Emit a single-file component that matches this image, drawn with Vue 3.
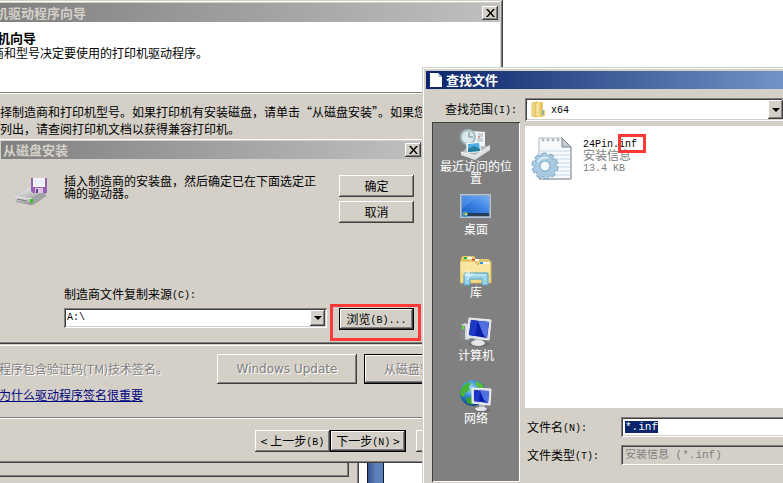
<template>
  <main class="desktop">
    <!-- 后面的窗口 -->
    <div class="back-window"><div class="back-panel"></div></div>
    <div class="blue-strip"></div>

    <!-- 添加打印机驱动程序向导 -->
    <section class="window wizard">
      <header class="title-bar inactive">
        <span class="title">机驱动程序向导</span>
        <button class="close" type="button" aria-label="关闭">
          <svg width="9" height="8" viewBox="0 0 9 8"><path d="M0 0h2l2.5 3L7 0h2L5.5 4 9 8H7L4.5 5 2 8H0l3.500-4z" /></svg>
        </button>
      </header>
      <div class="wizard-head">
        <h1>机向导</h1>
        <p>商和型号决定要使用的打印机驱动程序。</p>
      </div>
      <p class="wizard-note">择制造商和打印机型号。如果打印机有安装磁盘，请单击“从磁盘安装”。如果您<br>列出，请查阅打印机文档以获得兼容打印机。</p>
      <div class="wizard-list"></div>
      <div class="sign-row">
        <span class="sign-text">程序包含验证码(TM)技术签名。</span>
        <button class="btn tall update" type="button" disabled>Windows Update</button>
        <button class="btn tall default" type="button" disabled>从磁盘安装</button>
      </div>
      <a class="sign-link" href="#">为什么驱动程序签名很重要</a>
      <footer class="wizard-foot">
        <button class="btn" type="button">&lt; 上一步<i>(B)</i></button>
        <button class="btn default" type="button">下一步<i>(N)</i> &gt;</button>
        <button class="btn cancel" type="button" aria-label="取消"></button>
      </footer>
    </section>

    <!-- 从磁盘安装 -->
    <section class="window install">
      <header class="title-bar inactive">
        <span class="title">从磁盘安装</span>
        <button class="close" type="button" aria-label="关闭">
          <svg width="9" height="8" viewBox="0 0 9 8"><path d="M0 0h2l2.5 3L7 0h2L5.5 4 9 8H7L4.5 5 2 8H0l3.500-4z" /></svg>
        </button>
      </header>
      <div class="install-body">
        <svg class="disk" width="32" height="32" viewBox="0 0 32 32">
          <defs>
            <linearGradient id="drive" x1="0" y1="0" x2="1" y2="1">
              <stop offset="0" stop-color="#fafafa" /><stop offset="1" stop-color="#9a9a9e" />
            </linearGradient>
            <linearGradient id="drive-front" x1="0" y1="0" x2="0" y2="1">
              <stop offset="0" stop-color="#f4f4f4" /><stop offset="1" stop-color="#88888c" />
            </linearGradient>
          </defs>
          <path d="M0 21 14 12 31 16v5L18 30 1 27z" fill="#8a8a8e" />
          <path d="M0 21 14 12 31 16 17 23z" fill="url(#drive)" />
          <path d="M0 21 17 23v7L1 27z" fill="url(#drive-front)" />
          <path d="M17 23 31 16v5L17 30z" fill="#a4a4a8" />
          <path d="M2 24l10 2" stroke="#77777c" />
          <path d="M15 24h3v4h-3z" fill="#39c21b" />
          <path d="M16 3h16v15H18l-2-2z" fill="#9560ae" />
          <path d="M18 3h12v9H18z" fill="#f2f6fc" />
          <path d="M19 6h10M19 8h10" stroke="#dde6f5" />
          <path d="M20 13h8v5h-8z" fill="#d8c6e3" />
          <path d="M21 14h2v4h-2z" fill="#704087" />
        </svg>
        <p class="install-text">插入制造商的安装盘，然后确定已在下面选定正确的驱动器。</p>
        <div class="install-actions">
          <button class="btn" type="button">确定</button>
          <button class="btn" type="button">取消</button>
        </div>
      </div>
      <div class="source">
        <label for="source">制造商文件复制来源<i>(C):</i></label>
        <div class="source-row">
          <div class="combo">
            <select id="source" v-model="source"><option>A:\</option></select>
            <span class="arrow"></span>
          </div>
          <button class="btn default browse" type="button">浏览<i>(B)...</i></button>
        </div>
      </div>
    </section>
    <div class="mark mark-browse"></div>

    <!-- 查找文件 -->
    <section class="window finder">
      <header class="title-bar active">
        <svg width="14" height="14" viewBox="0 0 14 14">
          <path d="M1 0h8l4 4v10H1z" fill="#fff" /><path d="M9 0v4h4z" fill="#c3cad8" />
        </svg>
        <span class="title">查找文件</span>
      </header>
      <div class="look-in">
        <label for="folder">查找范围<i>(I):</i></label>
        <div class="combo folder">
          <svg width="15" height="17" viewBox="0 0 15 17">
            <defs>
              <linearGradient id="leaf" x1="0" y1="0" x2="1" y2="0">
                <stop offset="0" stop-color="#f9e9a6" /><stop offset="1" stop-color="#dcb649" />
              </linearGradient>
            </defs>
            <path d="M6 1h6v8h2v6l-3 1H6z" fill="#ecd070" />
            <path d="M1 2 6 1v15l-5-1z" fill="url(#leaf)" stroke="#e0bf58" />
            <path d="M7 2h4v13H7z" fill="url(#leaf)" />
            <path d="M6 2v13" stroke="#fff8d8" />
            <path d="M12 9v5" stroke="#3b9bd8" />
          </svg>
          <select id="folder" v-model="folder"><option>x64</option></select>
          <span class="arrow"></span>
        </div>
      </div>
      <div class="finder-body">
        <nav class="places">
          <a v-for="place in places" :key="place.id" href="#" class="place">
            <svg v-if="place.id === 'recent'" width="32" height="32" viewBox="0 0 32 32">
              <path d="M12 3 25 4v16H13z" fill="#f4f5f6" />
              <path d="M18 6h5M18 8h5M17 11h6M17 13h6" stroke="#9fb2bd" /><path d="M18 9h2" stroke="#cf4f49" />
              <circle cx="8" cy="9" r="8" fill="#a5bcc3" /><circle cx="8" cy="9" r="6" fill="#dbe8ec" />
              <path d="M9 4v5h4" fill="none" stroke="#6d8790" />
              <path d="M2 24 9 18 27 18 30 17v4L15 31 1 27z" fill="#b9bdc0" />
              <path d="M6 15l14-1 1 10-14 1z" fill="#e9f4fb" />
              <path d="M8 16l11-1 1 8-12 1z" fill="#4fabe5" /><path d="M8 21l6-3 6 3v2l-12 1z" fill="#277f9c" />
              <path d="M1 24l14 4 15-10v4L15 32 1 27z" fill="#dcdfe0" /><path d="M1 24l14 4 15-10" fill="none" stroke="#f8f8f8" />
            </svg>
            <svg v-else-if="place.id === 'desktop'" width="32" height="32" viewBox="0 0 32 32">
              <defs>
                <linearGradient id="screen" x1="0" y1="1" x2="1" y2="0">
                  <stop offset="0" stop-color="#1c5fc8" /><stop offset=".5" stop-color="#3d83e4" /><stop offset="1" stop-color="#76adf4" />
                </linearGradient>
              </defs>
              <path d="M0 3h31v24H0z" fill="#b5c3d7" /><path d="M1 4h29v22H1z" fill="#8fa4c2" />
              <path d="M2 5h27v17H2z" fill="url(#screen)" /><path d="M2 5h18Q10 10 2 18z" fill="#6da6ee" opacity=".35" />
              <path d="M2 22h27v3H2z" fill="#263d55" />
              <circle cx="5" cy="23" r="3" fill="#3c93bd" /><path d="M3 22h2v1H3z" fill="#ed7d3f" /><path d="M5 22h2v1H5z" fill="#9bd34d" /><path d="M5 23h2v1H5z" fill="#ffe05b" />
            </svg>
            <svg v-else-if="place.id === 'library'" width="32" height="32" viewBox="0 0 32 32">
              <path d="M1 4 3 2h11l2 3h13v6H1z" fill="#e3c768" /><path d="M4 3h8v2H4z" fill="#fff" /><path d="M4 3h3v2H4z" fill="#20b537" />
              <path d="M9 5h9l2 3h11v20H9z" fill="#f1da86" /><path d="M12 5h7v2h-7z" fill="#fff" /><path d="M12 5h3v2h-3z" fill="#d64a31" />
              <path d="M0 7h15l3 4 2-4h11v22H0z" fill="#f8e6a0" stroke="#d3b45a" />
              <path d="M20 8h9v2h-9z" fill="#fff" /><path d="M20 8h3v2h-3z" fill="#3193dd" />
              <path d="M1 18h29v10H1z" fill="#edcf72" opacity=".5" />
              <path d="M4 20q0-1 1-1h22q1 0 1 1v11h-6v-6H10v6H4z" fill="#9bd3e9" stroke="#4fa3c5" />
              <path d="M5 21h21" stroke="#d9f3fc" />
              <path d="M8 15v11M3 20h11M5 17l6 6M11 17l-6 6" stroke="#fff" opacity=".7" />
            </svg>
            <svg v-else-if="place.id === 'computer'" width="32" height="32" viewBox="0 0 32 32">
              <path d="M1 8 5 6l5 2v14l-4 1-5-3z" fill="#d3d7da" /><path d="M1 8l4 1v14l-4-3z" fill="#81888d" /><path d="M2 9h2v3H2z" fill="#63dc27" />
              <ellipse cx="19" cy="27" rx="10" ry="3" fill="#62676c" opacity=".7" />
              <path d="M15 22h7l1 4h-9z" fill="#b5babd" /><ellipse cx="18" cy="26" rx="7" ry="3" fill="#e5e7e8" />
              <path d="M9 1 31 3 29 23 7 20z" fill="#d6dce1" stroke="#f2f4f5" />
              <path d="M11 3 29 5 27 21 9 18z" fill="#081da8" /><path d="M11 3l7 1-3 15-6-1z" fill="#1c38c8" /><path d="M18 4l5 13 3 4 1 0 2-16z" fill="#4f70e0" />
            </svg>
            <svg v-else width="32" height="32" viewBox="0 0 32 32">
              <defs>
                <radialGradient id="globe" cx=".4" cy=".3" r=".7">
                  <stop offset="0" stop-color="#a2dcfa" /><stop offset=".5" stop-color="#2f85cf" /><stop offset="1" stop-color="#0c4690" />
                </radialGradient>
              </defs>
              <circle cx="13" cy="13" r="13" fill="url(#globe)" />
              <path d="M2 7 8 2l3 1-2 4 1 3-5 3-1 4-3-1-1-4z" fill="#48b337" /><path d="M16 1l6 3 3 5-5-1-4-2z" fill="#5dbd37" /><path d="M6 18l5-1 2 4-1 4-5-2z" fill="#37a02e" />
              <ellipse cx="22" cy="30" rx="8" ry="2" fill="#5c6064" opacity=".7" /><path d="M19 24h6v4h-6z" fill="#b1b5b8" /><ellipse cx="21" cy="29" rx="6" ry="2" fill="#e2e4e6" />
              <path d="M12 8 31 9 30 25 12 23z" fill="#d6dce1" stroke="#f2f4f5" />
              <path d="M14 10l15 1-1 12-14-2z" fill="#081da8" /><path d="M14 10l6 1-1 11-5-1z" fill="#1c38c8" /><path d="M20 11l4 9 4 3 1-12z" fill="#4f70e0" />
            </svg>
            <span>{{ place.name }}</span>
          </a>
        </nav>
        <div class="finder-main">
          <div class="files">
            <div class="file">
              <svg width="42" height="46" viewBox="0 0 42 46">
                <path d="M8 3h23l9 9v32H8z" fill="#f7f9fb" stroke="#b3b9bf" />
                <path d="M40 12v32H8" fill="none" stroke="#8f969c" />
                <path d="M31 3v9h9z" fill="#c6ccd1" stroke="#7c858d" />
                <path d="M9 16h30M9 20h30M9 24h30M9 28h30M9 32h30M9 36h30M9 40h30" stroke="#c3dbec" />
                <g fill="#fff" stroke="#9aa1a7">
                  <circle cx="12" cy="5" r="1" /><circle cx="17" cy="5" r="1" /><circle cx="22" cy="5" r="1" /><circle cx="27" cy="5" r="1" />
                </g>
                <circle cx="14" cy="31" r="11" fill="none" stroke="#7fa9c8" stroke-width="5" stroke-dasharray="4.600 2.310" />
                <circle cx="14" cy="31" r="8" fill="none" stroke="#7fa9c8" stroke-width="7" />
                <circle cx="14" cy="31" r="11" fill="none" stroke="#a9cbe2" stroke-width="3" stroke-dasharray="4.600 2.310" />
                <circle cx="14" cy="31" r="8" fill="none" stroke="#a9cbe2" stroke-width="5" />
                <circle cx="14" cy="31" r="4" fill="#f4f8fb" />
                <path d="M7 27a8 8 0 0 1 10-4" fill="none" stroke="#dcecf7" stroke-width="2" />
              </svg>
              <div class="file-info">
                <span class="file-name"><i>24Pin.inf</i></span>
                <span>安装信息</span>
                <span><i>13.4 KB</i></span>
              </div>
            </div>
          </div>
          <form class="fields" @submit.prevent>
            <label for="file-name">文件名<i>(N):</i></label>
            <input id="file-name" ref="nameInput" v-model="fileName" type="text" autocomplete="off" spellcheck="false">
            <label for="file-type">文件类型<i>(T):</i></label>
            <select id="file-type" disabled><option>安装信息 (*.inf)</option></select>
          </form>
        </div>
      </div>
    </section>
    <div class="mark mark-inf"></div>
  </main>
</template>

<script setup>
import { ref, onMounted } from 'vue'

const source = ref('A:\\')
const folder = ref('x64')
const fileName = ref('*.inf')
const nameInput = ref(null)

const places = [
  { id: 'recent', name: '最近访问的位置' },
  { id: 'desktop', name: '桌面' },
  { id: 'library', name: '库' },
  { id: 'computer', name: '计算机' },
  { id: 'network', name: '网络' }
]

// 打开时选中文件名
onMounted(() => {
  nameInput.value.focus()
  nameInput.value.select()
})
</script>

<style>
body {
  margin: 0;
  background: #fff;
}
</style>

<style scoped>
.desktop {
  position: relative;
  height: 100vh;
  overflow: hidden;
  background: #fff;
  color: #000;
  font-family: "Noto Sans CJK SC", sans-serif;
  font-size: 12px;
  line-height: 12px;
}

.desktop * {
  box-sizing: border-box;
}

h1,
p {
  margin: 0;
}

i {
  font-family: "Liberation Mono", monospace;
  font-size: 10px;
  font-style: normal;
  line-height: 10px;
  vertical-align: 1px;
}

button,
input,
select {
  margin: 0;
  padding: 0;
  border: 0;
  border-radius: 0;
  outline: 0;
  appearance: none;
  color: #000;
  font-family: inherit;
  font-size: 12px;
  line-height: 12px;
}

.window {
  position: absolute;
  padding: 3px;
  background: #d4d0c8;
  box-shadow: inset -1px -1px #404040, inset 1px 1px #d4d0c8, inset -2px -2px #808080, inset 2px 2px #fff;
}

.title-bar {
  display: flex;
  align-items: center;
  height: 18px;
  padding: 0 2px;
}

.title-bar.inactive {
  background: linear-gradient(90deg, #808080, #c0c0c0);
  color: #d4d0c8;
}

.title-bar.active {
  gap: 3px;
  padding-left: 3px;
  background: linear-gradient(90deg, #0a246a, #7094c6);
  color: #fff;
}

.title {
  flex: 1;
  font-size: 13px;
  font-weight: 700;
}

.close {
  display: grid;
  place-items: center;
  width: 16px;
  height: 14px;
}

.close,
.btn,
.arrow {
  background: #d4d0c8;
  box-shadow: inset -1px -1px #404040, inset 1px 1px #fff, inset -2px -2px #808080;
}

.btn {
  width: 75px;
  height: 22px;
  white-space: nowrap;
}

.btn.default {
  border: 1px solid #000;
}

.btn:disabled {
  color: #808080;
  text-shadow: 1px 1px #fff;
}

/* 后面的窗口 */
.back-window {
  position: absolute;
  top: 440px;
  bottom: 0;
  left: 0;
  width: 359px;
  padding-right: 9px;
  border-right: 1px solid #404040;
  background: #d4d0c8;
  box-shadow: inset -1px 0 #808080;
}

.back-panel {
  height: 37px;
  box-shadow: inset -1px -1px #404040, inset -2px -2px #808080;
}

.blue-strip {
  position: absolute;
  top: 440px;
  bottom: 0;
  left: 367px;
  width: 17px;
  border: solid #10182a;
  border-width: 0 1px;
  background: linear-gradient(90deg, #36568c, #5b82b8 50%, #5b82b8);
}

/* 向导 */
.wizard {
  top: 0;
  left: -8px;
  width: 511px;
  height: 463px;
}

.wizard .title-bar {
  height: 19px;
  padding-left: 0;
}

.wizard-head {
  height: 71px;
  padding: 9px 0 0;
  border-bottom: 1px solid #808080;
  background: #fff;
}

.wizard-head h1 {
  padding-left: 2px;
  font-size: 13px;
  line-height: 14px;
}

.wizard-head p {
  margin-left: -3px;
  line-height: 16px;
}

.wizard-note {
  padding: 9px 0 0 5px;
  border-top: 1px solid #fff;
  line-height: 17px;
  white-space: nowrap;
}

.wizard-list {
  height: 209px;
  border-bottom: 1px solid #fff;
}

.sign-row {
  display: flex;
  align-items: center;
  gap: 7px;
  padding: 8px 0 0 4px;
}

.sign-text {
  width: 211px;
  color: #808080;
  text-shadow: 1px 1px #fff;
  white-space: nowrap;
}

.btn.tall {
  flex: none;
  width: 140px;
  height: 30px;
}

.btn.update {
  font-family: "DejaVu Sans", sans-serif;
}

.btn.tall.default {
  width: 100px;
}

.sign-link {
  display: block;
  margin: 4px 0 0 4px;
  color: #000080;
  line-height: 14px;
}

.wizard-foot {
  display: flex;
  margin-top: 15px;
  padding: 12px 0 0 260px;
  border-top: 1px solid #808080;
  box-shadow: inset 0 1px #fff;
}

.wizard-foot .cancel {
  margin-left: 10px;
}

.wizard-foot .default {
  width: 76px;
}

/* 从磁盘安装 */
.install {
  top: 138px;
  left: -2px;
  width: 429px;
  height: 206px;
}

.install .title-bar {
  padding-right: 3px;
}

.install-body {
  display: flex;
  gap: 17px;
  padding: 16px 10px 0 14px;
}

.disk {
  flex: none;
}

.install-text {
  width: 258px;
}

.install-actions {
  display: flex;
  flex-direction: column;
  gap: 4px;
  margin-left: auto;
}

.source {
  padding: 65px 10px 0 63px;
}

.source label {
  display: block;
  height: 12px;
}

.source-row {
  display: flex;
  gap: 12px;
  margin-top: 8px;
}

.combo {
  display: flex;
  flex: 1;
  align-items: center;
  height: 20px;
  padding: 2px;
  background: #fff;
  box-shadow: inset 1px 1px #808080, inset -1px -1px #fff, inset 2px 2px #404040, inset -2px -2px #d4d0c8;
}

.combo select {
  flex: 1;
  min-width: 0;
  padding-left: 1px;
  background: #fff;
  font-family: "Liberation Mono", monospace;
  font-size: 10px;
}

.arrow {
  display: grid;
  place-items: center;
  width: 15px;
  height: 100%;
}

.arrow::after {
  width: 0;
  border: 4px solid transparent;
  border-top-color: #000;
  border-bottom: 0;
  content: "";
}

/* 红色标注框 */
.mark {
  position: absolute;
  border: 3px solid #ff3838;
  pointer-events: none;
}

.mark-browse {
  top: 304px;
  left: 330px;
  width: 91px;
  height: 37px;
}

.mark-inf {
  top: 134px;
  left: 618px;
  width: 28px;
  height: 19px;
}

/* 查找文件 */
.finder {
  top: 67px;
  right: 0;
  bottom: 0;
  left: 422px;
  display: flex;
  flex-direction: column;
  padding: 4px 0 0 4px;
  box-shadow: inset 1px 1px #d4d0c8, inset 2px 2px #fff;
}

.look-in {
  display: flex;
  align-items: center;
  padding: 9px 0 0 19px;
}

.look-in label {
  width: 80px;
}

.folder {
  height: 23px;
  padding-right: 0;
  padding-left: 6px;
}

.folder select {
  padding: 2px 0 0 5px;
}

.finder-body {
  display: flex;
  flex: 1;
  gap: 5px;
  padding: 1px 0 1px 6px;
}

.places {
  width: 88px;
  padding-top: 6px;
  background: #808080;
  box-shadow: inset 1px 1px #404040, inset -1px -1px #fff;
}

.place {
  display: flex;
  flex-direction: column;
  align-items: center;
  height: 63px;
  padding: 0 7px;
  color: #fff;
  text-align: center;
  text-decoration: none;
}

.place svg {
  flex: none;
}

.finder-main {
  display: flex;
  flex: 1;
  flex-direction: column;
  padding-top: 4px;
}

.files {
  flex: 1;
  padding: 9px 6px;
  background: #fff;
}

.file {
  display: flex;
  gap: 10px;
}

.file-info {
  display: flex;
  flex-direction: column;
  padding-top: 2px;
  color: #808080;
}

.file-info span {
  height: 12px;
}

.file-name {
  color: #000;
}

.fields {
  display: grid;
  grid-template-columns: 94px 1fr;
  row-gap: 8px;
  align-items: center;
  padding: 9px 0 17px 2px;
}

.fields input,
.fields select {
  width: 100%;
  height: 20px;
  padding-left: 4px;
  background: #fff;
  box-shadow: inset 1px 1px #808080, inset 0 -1px #fff, inset 2px 2px #404040, inset 0 -2px #d4d0c8;
  font-family: "Liberation Mono", "Noto Sans CJK SC", monospace;
  font-size: 11px;
}

.fields input::selection {
  background: #0a246a;
  color: #fff;
}

.fields select:disabled {
  background: #d4d0c8;
  color: #808080;
  opacity: 1;
}
</style>
